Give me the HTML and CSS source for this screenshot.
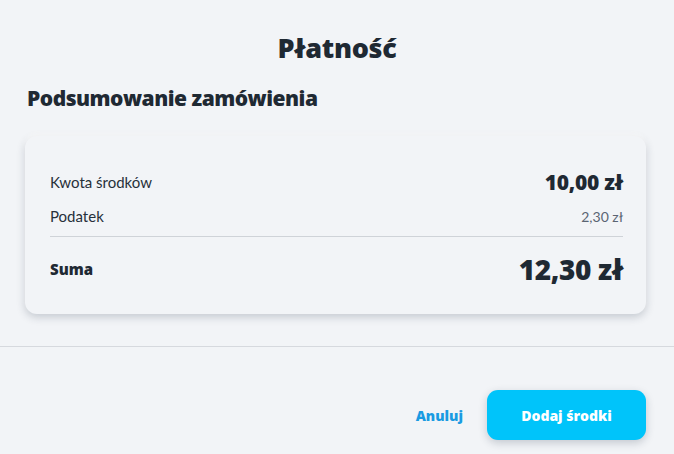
FILE: index.html
```html
<!DOCTYPE html>
<html lang="pl">
<head>
  <meta charset="UTF-8">
  <title>Płatność</title>
  <link rel="stylesheet" href="styles.css">
</head>
<body>

  <div class="modal">
    <h2 class="modal-title">Płatność</h2>

    <div class="modal-body">
      <h3 class="section-title">Podsumowanie zamówienia</h3>

      <!-- Summary card -->
      <div class="summary-card">
        <div class="summary-row">
          <span class="label">Kwota środków</span>
          <span class="amount">10,00 zł</span>
        </div>
        <div class="summary-row">
          <span class="label">Podatek</span>
          <span class="tax">2,30 zł</span>
        </div>
        <div class="summary-row total-row">
          <span class="label-strong">Suma</span>
          <span class="total">12,30 zł</span>
        </div>
      </div>
    </div>

    <!-- Footer -->
    <div class="modal-footer">
      <button class="btn-link">Anuluj</button>
      <button class="btn-primary">Dodaj środki</button>
    </div>
  </div>

</body>
</html>
```

FILE: styles.css
```css
body {
  font-family: Lato, "Noto Sans", sans-serif;
  margin: 0;
  padding: 0;
  background-color: #f2f4f7;
  color: #1f2933;
}

.modal {
  width: 674px;
  height: 454px;
  overflow: hidden;
}

.modal-title {
  margin: 0;
  padding-top: 31px;
  text-align: center;
  font-family: "Open Sans", sans-serif;
  font-size: 27px;
  font-weight: 800;
  letter-spacing: -0.3px;
  line-height: 34px;
}

.modal-body {
  padding: 0 28px 32px 25px;
  border-bottom: 1px solid #d6d9de;
}

.section-title {
  margin: 19px 0 0 2px;
  font-family: "Open Sans", sans-serif;
  font-size: 21px;
  font-weight: 800;
  letter-spacing: -0.5px;
  line-height: 28px;
}

.summary-card {
  margin-top: 24px;
  padding: 29px 23px 17px 25px;
  border-radius: 12px;
  background-color: #f2f4f7;
  box-shadow: 0 3px 8px rgba(30, 45, 70, 0.22), 0 -2px 4px rgba(255, 255, 255, 0.9);
}

.summary-row {
  display: flex;
  justify-content: space-between;
  align-items: center;
  height: 34px;
}

.label {
  font-size: 15px;
  color: #27303a;
}

.amount {
  font-family: "Open Sans", sans-serif;
  font-size: 21px;
  font-weight: 800;
  letter-spacing: -0.3px;
}

.tax {
  font-size: 14px;
  color: #5b6573;
}

.total-row {
  height: 56px;
  margin-top: 3px;
  border-top: 1px solid #cfd3d8;
  padding-top: 4px;
}

.label-strong {
  font-family: "Open Sans", sans-serif;
  font-size: 15px;
  font-weight: 800;
}

.total {
  font-family: "Open Sans", sans-serif;
  font-size: 28px;
  font-weight: 800;
  letter-spacing: -0.4px;
}

.modal-footer {
  display: flex;
  justify-content: flex-end;
  align-items: center;
  gap: 24px;
  padding: 43px 28px 0 0;
}

.btn-link {
  background: none;
  border: none;
  padding: 0;
  font-family: "Open Sans", sans-serif;
  font-size: 14px;
  font-weight: 800;
  color: #1a9be2;
  cursor: pointer;
}

.btn-primary {
  width: 159px;
  height: 50px;
  border: none;
  border-radius: 11px;
  background-color: #00c4fa;
  color: white;
  font-family: "Open Sans", sans-serif;
  font-size: 14px;
  font-weight: 800;
  box-shadow: 0 3px 8px rgba(30, 45, 70, 0.22);
  cursor: pointer;
}
```
